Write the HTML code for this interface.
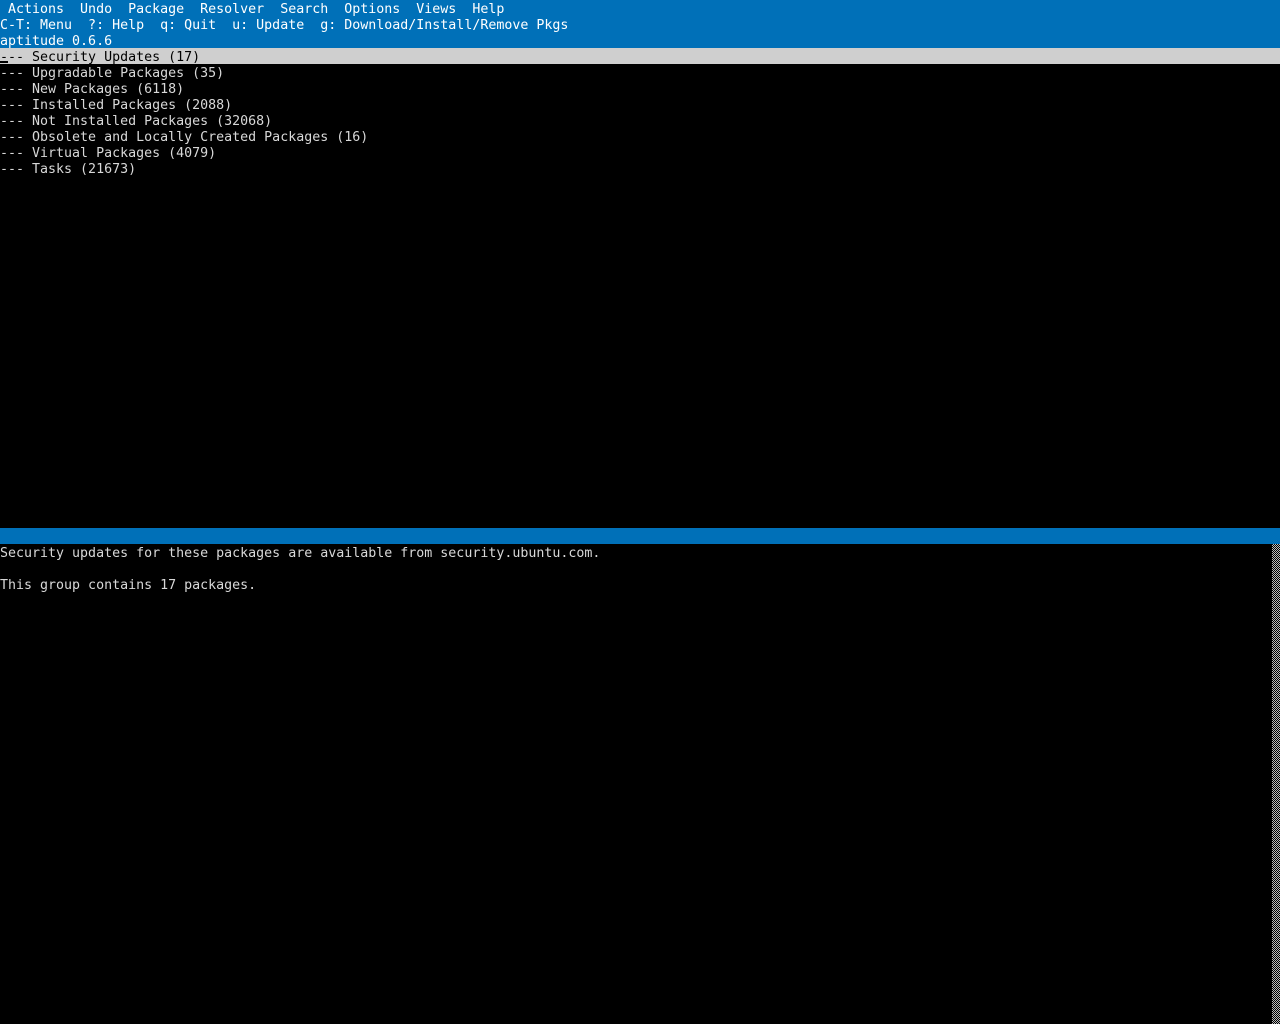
<!DOCTYPE html>
<html><head><style>
html,body{margin:0;padding:0;background:#000;width:1280px;height:1024px;overflow:hidden}
pre{margin:0;font-family:"DejaVu Sans Mono","Liberation Mono",monospace;font-size:13.3px;line-height:20px;color:#d8d8d8;white-space:pre}
.row{height:16px;width:1280px;position:absolute;left:0}
.b{background:#0070b8;color:#fff}
.s{background:#cfcfcf;color:#000}
.sb{position:absolute;left:1272px;top:544px;width:8px;height:480px;background-image:repeating-conic-gradient(#bbb 0 25%,#000 0 50%);background-size:2px 2px}
.cur{position:absolute;left:0;top:61px;width:8px;height:2px;background:#000}
</style></head><body>
<pre class="row b" style="top:0"> Actions  Undo  Package  Resolver  Search  Options  Views  Help</pre>
<pre class="row b" style="top:16px">C-T: Menu  ?: Help  q: Quit  u: Update  g: Download/Install/Remove Pkgs</pre>
<pre class="row b" style="top:32px">aptitude 0.6.6</pre>
<pre class="row s" style="top:48px">--- Security Updates (17)</pre>
<div class="cur"></div>
<pre class="row" style="top:64px">--- Upgradable Packages (35)</pre>
<pre class="row" style="top:80px">--- New Packages (6118)</pre>
<pre class="row" style="top:96px">--- Installed Packages (2088)</pre>
<pre class="row" style="top:112px">--- Not Installed Packages (32068)</pre>
<pre class="row" style="top:128px">--- Obsolete and Locally Created Packages (16)</pre>
<pre class="row" style="top:144px">--- Virtual Packages (4079)</pre>
<pre class="row" style="top:160px">--- Tasks (21673)</pre>
<pre class="row b" style="top:528px"> </pre>
<pre class="row" style="top:544px">Security updates for these packages are available from security.ubuntu.com.</pre>
<pre class="row" style="top:576px">This group contains 17 packages.</pre>
<div class="sb"></div>
</body></html>
